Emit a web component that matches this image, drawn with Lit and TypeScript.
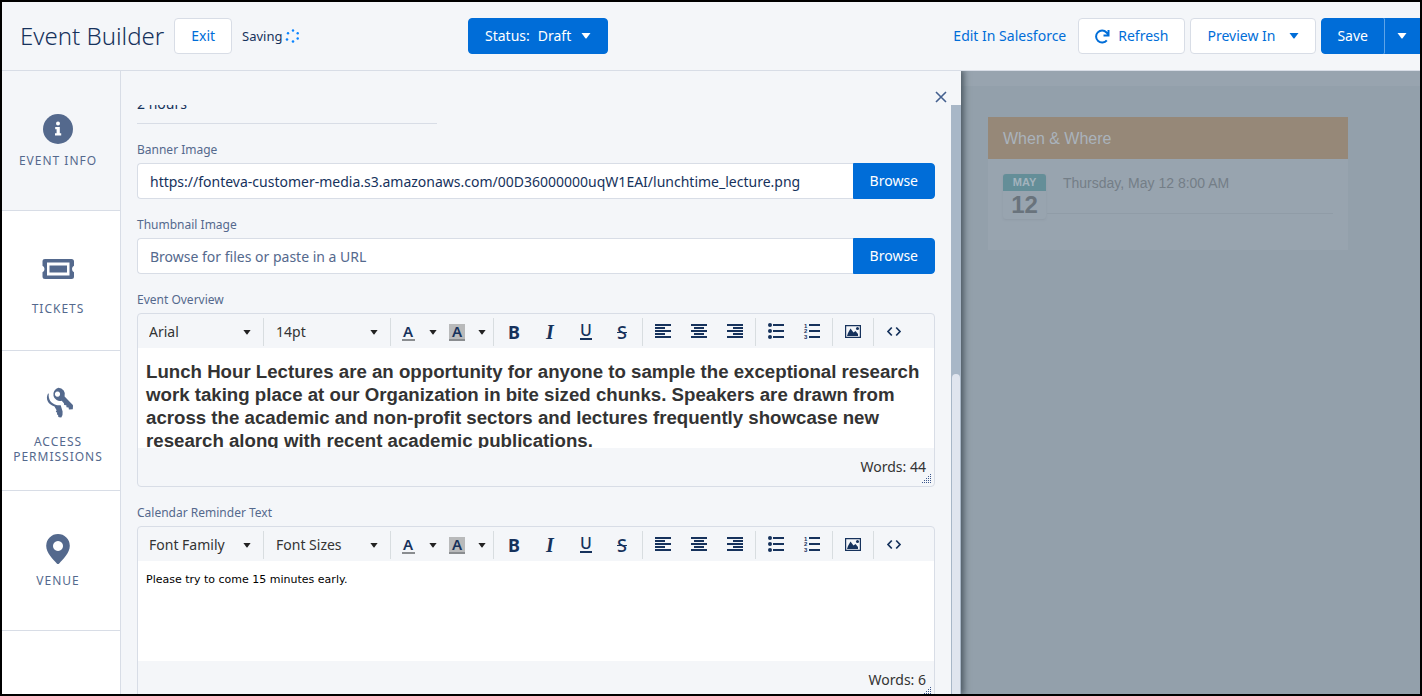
import { LitElement, html, svg, css, TemplateResult } from "lit";
import { customElement, property } from "lit/decorators.js";

const caret = (cls = "") => html`<svg class="caret ${cls}" viewBox="0 0 10 6" aria-hidden="true"><path d="M0.5 0h9L5.6 5.2q-.6.7-1.2 0z" /></svg>`;

const bars = (rows: number[][]) =>
  rows.map(([x, w], i) => svg`<rect x=${x} y=${1 + i * 3} width=${w} height="2" />`);

const glyphs: Record<string, TemplateResult> = {
  left: html`<svg viewBox="0 0 18 18">${bars([[1, 16], [1, 10], [1, 16], [1, 10], [1, 16]])}</svg>`,
  center: html`<svg viewBox="0 0 18 18">${bars([[1, 16], [4, 10], [1, 16], [4, 10], [1, 16]])}</svg>`,
  right: html`<svg viewBox="0 0 18 18">${bars([[1, 16], [7, 10], [1, 16], [7, 10], [1, 16]])}</svg>`,
  bullets: html`<svg viewBox="0 0 18 18"><circle cx="3" cy="2" r="2" /><circle cx="3" cy="8" r="2" /><circle cx="3" cy="14" r="2" /><path d="M6 1h11v2H6zM6 7h11v2H6zM6 13h11v2H6z" /></svg>`,
  numbers: html`<svg viewBox="0 0 18 18"><g class="digits"><text x="1" y="5">1</text><text x="1" y="10">2</text><text x="1" y="16">3</text></g><path d="M6 1h11v2H6zM6 7h11v2H6zM6 13h11v2H6z" /></svg>`,
  image: html`<svg viewBox="0 0 18 18"><path fill-rule="evenodd" d="M1 2h16v13H1zM2.2 3.2v10.600h13.600V3.200z" /><path d="M3 13l1-3 2.500-4.500 3 4 2-1.500 2.500 3v2z" /><circle cx="13.500" cy="5.500" r="1.500" /></svg>`,
  code: html`<svg class="stroked" viewBox="0 0 18 18"><path d="M6.800 4.500L3 8.500l3.800 4M11.200 4.500L15 8.500l-3.800 4" /></svg>`,
};

const navIcons: Record<string, TemplateResult> = {
  info: html`<svg class="small" viewBox="0 0 30 30"><circle cx="15" cy="15" r="15" /><g class="hole"><circle cx="15" cy="9.500" r="2" /><path d="M12.200 13h4.600v6.300h1.400v2.200h-6.200v-2.200h1.600v-4.100h-1.400z" /></g></svg>`,
  ticket: html`<svg class="large" viewBox="0 0 46 46"><path fill-rule="evenodd" d="M10 13h26.500q2.500 0 2.500 2.500v4.300q-2 1-2 3.200t2 3.200v4.300q0 2.500-2.500 2.500H10q-2.500 0-2.500-2.500v-4.300q2-1 2-3.200t-2-3.200v-4.300Q7.500 13 10 13zM12 16.500v13h22.500v-13z" /><path d="M14.500 19.500h17.500v7H14.500z" /></svg>`,
  keys: html`<svg class="large" viewBox="0 0 46 46"><path fill-rule="evenodd" d="M23.300 8.800a6.600 6.600 0 0 1 6.300 8.700l8 8.200q.5.600.4 1.300l-.2 3.300-3.900.1-.3-2-2.100-.2-.2-2-2.100-.3-.3-1.700-2.200-2.400A6.600 6.600 0 1 1 23.300 8.800zM22.500 12.500a2.600 2.600 0 1 0 .01 0z" /><path d="M12.900 14.800c-2.600 5 0 10.800 6.600 12.700l2.100 3.700-.8 1.500 1.400 1-.3 1.600 1.300.9-.1 1.200.9.900 2.300.1 1.200-2.300.1-3.600-1.900-6.200c-1.700-.1-2.600.1-4.500-.4-5.200-1.600-8.200-5.500-7.400-11.500z" /></svg>`,
  pin: html`<svg class="small" viewBox="0 0 30 30"><path fill-rule="evenodd" d="M15 0a11.800 11.800 0 0 1 11.800 11.800c0 7.200-7 13.600-10.600 17.700q-1.200 1-2.400 0C10.200 25.400 3.200 19 3.200 11.800A11.800 11.800 0 0 1 15 0zM15 7a5 5 0 1 0 .01 0z" /></svg>`,
};

@customElement("rich-editor")
export class RichEditor extends LitElement {
  @property() label = "";
  @property() family = "Font Family";
  @property() size = "Font Sizes";
  @property() text = "";
  @property() face = "plain";
  @property({ type: Number }) words = 0;

  static styles = css`
    :host { display: block; }
    * { box-sizing: border-box; }
    button, select, textarea { font: inherit; color: inherit; margin: 0; border: 0; background: none; }
    button { padding: 0; display: grid; place-items: center; }
    .label { display: block; margin-bottom: 4px; font-size: 12px; line-height: 19px; color: #54698d; }
    .editor { border: 1px solid #d8dde6; border-radius: 4px; overflow: hidden; }
    .toolbar { display: flex; height: 34px; padding-top: 4px; }
    .group { display: flex; height: 28px; padding: 0 2px; border-right: 1px solid #d8dde0; }
    .group:last-child { border-right: 0; }
    .choice { display: grid; grid-template-columns: 1fr 18px; align-items: center; color: #333; font-size: 14px; line-height: 20px; }
    .choice select { grid-area: 1 / 1 / 2 / 3; appearance: none; height: 28px; padding: 0 24px 0 9px; }
    .choice .caret { grid-area: 1 / 2; }
    .family { width: 121px; }
    .size { width: 122px; }
    .size select { padding-left: 10px; }
    .caret { width: 8px; height: 5px; fill: #222; }
    .pick { width: 30px; height: 28px; color: #16325c; font-size: 15px; font-weight: 600; }
    .ink { display: block; width: 13px; height: 17px; border-bottom: 2px solid #8a8d90; line-height: 15px; }
    .fill { width: 16px; background: #b9babb; }
    .drop { width: 19px; height: 28px; }
    .tool { width: 36px; height: 28px; color: #16325c; fill: #16325c; font-size: 18px; line-height: 20px; }
    .tool svg { width: 18px; height: 18px; }
    .stroked { fill: none; stroke: #16325c; stroke-width: 1.7; }
    .digits { font: bold 6px "Liberation Sans", sans-serif; }
    .bold { font-weight: 700; }
    .italic { font-family: "Liberation Serif", serif; font-style: italic; font-weight: 700; font-size: 20px; }
    .under { width: 12px; height: 15px; border-bottom: 2px solid #16325c; font-size: 16px; line-height: 11px; font-weight: 500; }
    .strike { text-decoration: line-through; font-size: 18px; font-weight: 500; }
    .body { display: block; width: 100%; height: 100px; resize: none; overflow: hidden; outline: 0; background: #fff; padding: 12px 8px; }
    .arial { font: bold 14pt/23px "Liberation Sans", Arial, sans-serif; color: #333; }
    .plain { font: 11px/14px "DejaVu Sans", Verdana, sans-serif; color: #000; }
    .status { display: grid; height: 38px; justify-items: end; padding: 9px 8px 0; color: #333; font-size: 14px; line-height: 20px; }
    .words, .grip { grid-area: 1 / 1; }
    .grip { align-self: end; width: 10px; height: 10px; margin: 0 -6px 2px 0; fill: #3c578c; }
  `;

  private tool(name: string, content: unknown) {
    return html`<button class="tool" type="button" aria-label=${name}>${content}</button>`;
  }

  render() {
    const dots = [0, 1, 2, 3, 4].flatMap((r) =>
      Array.from({ length: r + 1 }, (_, i) => svg`<rect x=${8 - i * 2} y=${r * 2} width="1" height="1" />`));
    return html`
      <label class="label" for="body">${this.label}</label>
      <div class="editor">
        <div class="toolbar">
          <div class="group"><div class="choice family"><select aria-label="Font family"><option>${this.family}</option></select>${caret()}</div></div>
          <div class="group"><div class="choice size"><select aria-label="Font size"><option>${this.size}</option></select>${caret()}</div></div>
          <div class="group">
            <button class="pick" type="button" aria-label="Text color"><span class="ink">A</span></button>
            <button class="drop" type="button" aria-label="Choose text color">${caret()}</button>
            <button class="pick" type="button" aria-label="Background color"><span class="ink fill">A</span></button>
            <button class="drop" type="button" aria-label="Choose background color">${caret()}</button>
          </div>
          <div class="group">
            ${this.tool("Bold", html`<span class="bold">B</span>`)}
            ${this.tool("Italic", html`<span class="italic">I</span>`)}
            ${this.tool("Underline", html`<span class="under">U</span>`)}
            ${this.tool("Strikethrough", html`<span class="strike">S</span>`)}
          </div>
          <div class="group">
            ${this.tool("Align left", glyphs.left)}${this.tool("Align center", glyphs.center)}${this.tool("Align right", glyphs.right)}
          </div>
          <div class="group">${this.tool("Bullet list", glyphs.bullets)}${this.tool("Numbered list", glyphs.numbers)}</div>
          <div class="group">${this.tool("Insert image", glyphs.image)}</div>
          <div class="group">${this.tool("Source code", glyphs.code)}</div>
        </div>
        <textarea id="body" class="body ${this.face}" spellcheck="false" .value=${this.text}></textarea>
        <div class="status">
          <span class="words">Words: ${this.words}</span>
          <svg class="grip" viewBox="0 0 10 10" aria-hidden="true">${dots}</svg>
        </div>
      </div>
    `;
  }
}

@customElement("app-root")
export class AppRoot extends LitElement {
  static styles = css`
    :host {
      display: flex; flex-direction: column; box-sizing: border-box; height: 100vh; overflow: hidden;
      border: 2px solid #000; background: #f4f6f9; color: #16325c;
      font-family: "Noto Sans", "Open Sans", sans-serif; font-size: 14px; line-height: 20px;
    }
    * { box-sizing: border-box; }
    button, input { font: inherit; color: inherit; margin: 0; }
    button { cursor: pointer; }
    .header { display: grid; grid-template-columns: 32% auto 1fr; align-items: center; height: 69px; padding-left: 18px; border-bottom: 1px solid #d8dde6; white-space: nowrap; }
    .start, .end { display: flex; align-items: center; }
    .start { gap: 10px; }
    .end { justify-content: flex-end; }
    .title { margin: 0; font-size: 24px; line-height: 32px; font-weight: 300; }
    .btn { display: flex; align-items: center; height: 36px; padding: 0 16px; border: 1px solid #d8dde6; border-radius: 4px; background: #fff; color: #006dd8; }
    .brand { border-color: #006dd8; background: #006dd8; color: #fff; }
    .saving { display: flex; align-items: center; gap: 2px; font-size: 13px; }
    .spinner { width: 14px; height: 14px; fill: #0a84ff; }
    .caret { width: 10px; height: 6px; fill: currentColor; }
    .status { gap: 8px; }
    .status .caret { margin-left: 2px; }
    .link { color: #006dd8; text-decoration: none; margin-right: 12px; }
    .refresh { gap: 8px; margin-right: 5px; }
    .refresh svg { width: 15px; height: 15px; fill: none; stroke: #006dd8; stroke-width: 2; }
    .preview-in { gap: 14px; margin-right: 5px; }
    .save { padding: 0 15px; border-radius: 4px 0 0 4px; }
    .more { padding: 0 12px; border-radius: 0; border-left-color: #5ea4e8; }

    .main { flex: 1; min-height: 0; display: grid; grid-template-columns: 119px 840fr 459fr; }
    .nav { background: #fff; border-right: 1px solid #d8dde6; overflow: hidden; }
    .nav-item { display: flex; flex-direction: column; align-items: center; justify-content: center; gap: 9px; height: 140px; padding: 1px 14px 0 8px; border-bottom: 1px solid #d8dde6; color: #54698d; fill: #54698d; font-size: 12px; line-height: 15px; letter-spacing: 1px; text-align: center; text-transform: uppercase; text-decoration: none; }
    .nav-item.active { background: #f4f6f9; }
    .small { width: 30px; height: 30px; }
    .large { width: 46px; height: 46px; }
    .hole { fill: #fff; }

    .panel { display: flex; flex-direction: column; min-width: 0; min-height: 0; z-index: 1; box-shadow: 2px 0 6px 1px rgba(40, 52, 62, .65); background: #f4f6f9; clip-path: inset(0 -12px 0 0); }
    .bar { display: flex; flex: none; justify-content: flex-end; align-items: flex-end; height: 34px; padding: 0 14px 2px; }
    .close { display: grid; place-items: center; width: 12px; height: 12px; padding: 0; border: 0; background: none; }
    .close svg { width: 12px; height: 12px; stroke: #44608f; stroke-width: 1.6; }
    .scroller { flex: 1; min-height: 0; display: grid; grid-template-columns: 1fr 10px; grid-template-rows: 100%; overflow: hidden; }
    .form { display: flex; flex-direction: column; gap: 16px; margin-top: -17px; padding: 0 16px; min-width: 0; }
    .duration { width: 300px; height: 36px; flex: none; padding: 0 0 4px; border: 0; border-bottom: 1px solid #d8dde6; background: none; }
    .label { display: block; margin-bottom: 4px; font-size: 12px; line-height: 19px; color: #54698d; }
    .picker { display: flex; }
    .url { flex: 1; min-width: 0; height: 36px; padding: 0 12px; border: 1px solid #d8dde6; border-right: 0; border-radius: 4px 0 0 4px; background: #fff; }
    .url::placeholder { color: #54698d; opacity: 1; }
    .browse { border-radius: 0 4px 4px 0; }
    .track { background: #a8b7c7; padding: 269px 1px 0; }
    .thumb { height: 100%; border-radius: 4px 4px 0 0; background: #e0e5ee; }

    .preview { background: #93a0ab; border-top: 15px solid #98a4af; padding: 31px 27px; overflow: hidden; font-family: "Liberation Sans", Arial, sans-serif; }
    .card { max-width: 360px; background: #98a4af; padding-bottom: 31px; }
    .card-title { margin: 0; padding: 12px 15px 10px; background: #968878; color: #aab3bc; font-size: 16px; line-height: 20px; font-weight: 400; }
    .when { display: flex; gap: 17px; padding: 15px 15px 0; color: #747e87; }
    .date { flex: none; width: 43px; border-radius: 3px; overflow: hidden; text-align: center; font-weight: 700; box-shadow: 0 1px 2px rgba(110, 122, 132, .2); }
    .month { background: #648e98; color: #a3b3bd; font-size: 11px; line-height: 17px; }
    .day { font-size: 24px; line-height: 28px; color: #69737c; }
    .time { flex: 1; height: 40px; border-bottom: 1px solid #909ca7; margin-left: -16px; padding-left: 16px; line-height: 19px; }
  `;

  private nav = [
    { icon: "info", label: "Event Info" },
    { icon: "ticket", label: "Tickets" },
    { icon: "keys", label: "Access Permissions" },
    { icon: "pin", label: "Venue" },
  ];

  private imageField(id: string, label: string, value: string) {
    return html`<div class="field">
      <label class="label" for=${id}>${label}</label>
      <div class="picker">
        <input class="url" id=${id} type="text" .value=${value} placeholder="Browse for files or paste in a URL" />
        <button class="btn brand browse" type="button">Browse</button>
      </div>
    </div>`;
  }

  render() {
    return html`
      <header class="header">
        <div class="start">
          <h1 class="title">Event Builder</h1>
          <button class="btn" type="button">Exit</button>
          <span class="saving">Saving
            <svg class="spinner" viewBox="0 0 14 14" aria-hidden="true"><circle cx="8" cy="1.500" r="1.200" /><circle cx="12.700" cy="4.200" r="1.200" /><circle cx="12.700" cy="9.500" r="1.200" /><circle cx="8" cy="12.500" r="1.300" /><circle cx="2" cy="10.500" r="1.300" /><circle cx="3" cy="4.200" r="1.200" /></svg>
          </span>
        </div>
        <button class="btn brand status" type="button"><span>Status:</span><span>Draft</span>${caret()}</button>
        <div class="end">
          <a class="link" href="#">Edit In Salesforce</a>
          <button class="btn refresh" type="button">
            <svg viewBox="0 0 15 15" aria-hidden="true"><path d="M11.800 11.300A6 6 0 1 1 11.500 3.500L13.500 5.500M13.500 1v5.500H8.500" /></svg>Refresh
          </button>
          <button class="btn preview-in" type="button">Preview In ${caret()}</button>
          <button class="btn brand save" type="button">Save</button>
          <button class="btn brand more" type="button" aria-label="More save options">${caret()}</button>
        </div>
      </header>
      <div class="main">
        <nav class="nav">
          ${this.nav.map((n, i) => html`<a class="nav-item ${i === 0 ? "active" : ""}" href="#">${navIcons[n.icon]}<span>${n.label}</span></a>`)}
        </nav>
        <section class="panel">
          <div class="bar">
            <button class="close" type="button" aria-label="Close"><svg viewBox="0 0 12 12"><path d="M1 1l10 10M11 1L1 11" /></svg></button>
          </div>
          <div class="scroller">
            <div class="form">
              <input class="duration" type="text" aria-label="Duration" .value=${"2 hours"} />
              ${this.imageField("banner", "Banner Image", "https://fonteva-customer-media.s3.amazonaws.com/00D36000000uqW1EAI/lunchtime_lecture.png")}
              ${this.imageField("thumbnail", "Thumbnail Image", "")}
              <rich-editor label="Event Overview" family="Arial" size="14pt" face="arial" words="44"
                text="Lunch Hour Lectures are an opportunity for anyone to sample the exceptional research work taking place at our Organization in bite sized chunks. Speakers are drawn from across the academic and non-profit sectors and lectures frequently showcase new research along with recent academic publications."></rich-editor>
              <rich-editor label="Calendar Reminder Text" words="6" text="Please try to come 15 minutes early."></rich-editor>
            </div>
            <div class="track"><div class="thumb"></div></div>
          </div>
        </section>
        <aside class="preview">
          <div class="card">
            <h2 class="card-title">When &amp; Where</h2>
            <div class="when">
              <div class="date"><div class="month">MAY</div><div class="day">12</div></div>
              <div class="time">Thursday, May 12 8:00 AM</div>
            </div>
          </div>
        </aside>
      </div>
    `;
  }
}
